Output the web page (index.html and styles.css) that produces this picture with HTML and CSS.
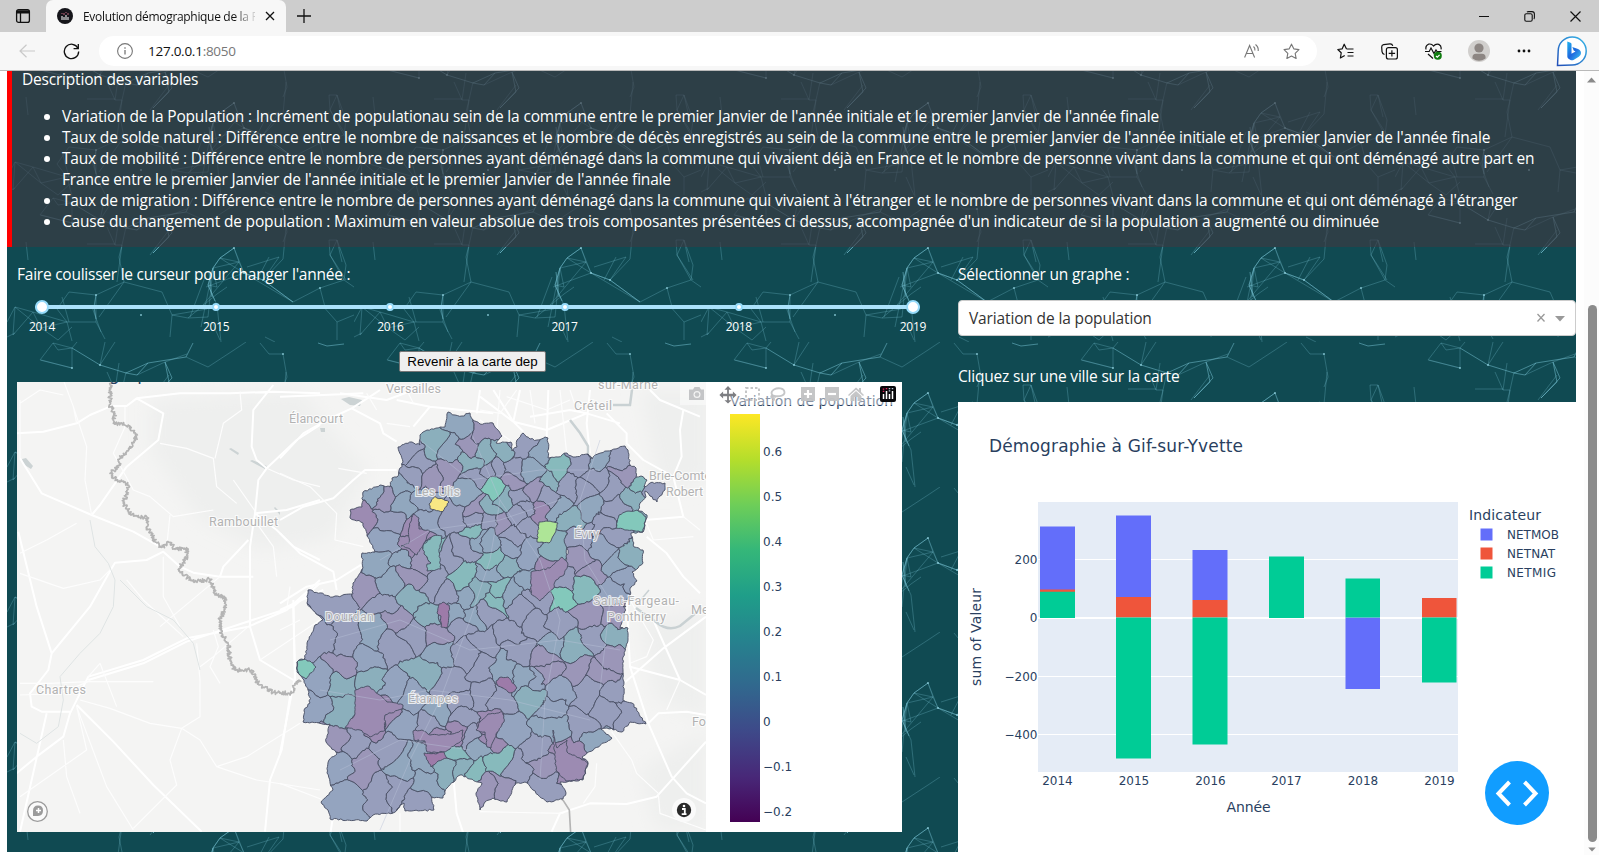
FILE: index.html
```html
<!DOCTYPE html>
<html lang="fr">
<head>
<meta charset="utf-8">
<title>Evolution démographique de la France</title>
<link rel="stylesheet" href="styles.css">
</head>
<body>
<header class="browser">
  <div class="tabbar">
    <svg class="tabs-icon" width="16" height="16" viewBox="0 0 16 16" fill="none" stroke="#111" stroke-width="1.3"><rect x="1.6" y="1.6" width="12.8" height="12.8" rx="2"/><path d="M2 3.2h12M2 4.6h12" stroke-width="1.8"/><path d="M5.5 5v9"/></svg>
    <div class="tab">
      <svg width="16" height="16" viewBox="0 0 16 16"><circle cx="8" cy="8" r="8" fill="#15151a"/><path d="M5 8v4M7 9v3M9 7v5M11 9v3" stroke="#ddd" stroke-width="1.2"/><path d="M5 5v1M7 5v2M9 4v1M11 5v2" stroke="#a2566a" stroke-width="1.2"/></svg>
      <span class="tab-title">Evolution démographique de la F</span>
      <svg width="10" height="10" viewBox="0 0 10 10" stroke="#111" stroke-width="1.3"><path d="M1 1l8 8M9 1l-8 8"/></svg>
    </div>
    <svg class="plus" width="14" height="14" viewBox="0 0 14 14" stroke="#111" stroke-width="1.3"><path d="M7 0v14M0 7h14"/></svg>
    <div class="win">
      <svg width="10" height="10" viewBox="0 0 10 10" stroke="#111"><path d="M0 5.5h10"/></svg>
      <svg width="11" height="11" viewBox="0 0 11 11" fill="none" stroke="#111" stroke-width="1.1"><rect x=".8" y="2.8" width="7.4" height="7.4" rx="1.5"/><path d="M3 1.2q.5-.6 1.5-.6H8q2.4 0 2.4 2.4v3.500q0 1-.6 1.500"/></svg>
      <svg width="11" height="11" viewBox="0 0 11 11" stroke="#111" stroke-width="1.2"><path d="M.5.5l10 10M10.500.5l-10 10"/></svg>
    </div>
  </div>
  <div class="toolbar">
    <svg class="back" width="16" height="14" viewBox="0 0 16 14" fill="none" stroke="#c9c9c9" stroke-width="1.2"><path d="M16 7H1M7.500.8L1 7l6.500 6.200"/></svg>
    <svg class="reload" width="17" height="17" viewBox="0 0 18 18" fill="none" stroke="#111" stroke-width="1.400"><path d="M15.800 5.500A7.600 7.600 0 1 0 16.600 9"/><path d="M16.200 1v5h-5"/></svg>
    <div class="pill">
      <svg width="16" height="16" viewBox="0 0 16 16" fill="none" stroke="#777" stroke-width="1.1"><circle cx="8" cy="8" r="7.400"/><path d="M8 7v4.600M8 4.200v1.500" stroke-width="1.300"/></svg>
      <span class="url">127.0.0.1<i>:8050</i></span>
      <svg class="read" width="16" height="16" viewBox="0 0 16 16" fill="none" stroke="#777" stroke-width="1.100"><path d="M.6 14.500L5.600 2.500l5 12M2.300 10.500h6.600M9.500 3.500q1.800 1.500 1.400 4M11.500 1.500q3.200 2.500 2.700 6.500"/></svg>
      <svg width="17" height="17" viewBox="0 0 18 18" fill="none" stroke="#777" stroke-width="1.200" stroke-linejoin="round"><path d="M9 1.200l2.400 5 5.500.8-4 3.900 1 5.500L9 13.800l-4.900 2.600 1-5.500-4-3.900 5.500-.8z"/></svg>
    </div>
    <div class="tools">
      <svg width="17" height="17" viewBox="0 0 17 17" fill="none" stroke="#111" stroke-width="1.200" stroke-linejoin="round"><path d="M9.500 6L7.200 1.200 5.200 5.800.8 6.500l3.400 3.300-.8 5.200 4.300-2.400M9.500 6h7M10.500 9.500h6M10.500 13h6"/></svg>
      <svg width="17" height="17" viewBox="0 0 17 17" fill="none" stroke="#111" stroke-width="1.200"><path d="M3.500 11.500Q1.300 10.800 1 8.600L.7 4.200Q.6 2 2.600 1.600L9 .8q2.200-.1 2.800 2"/><rect x="5.400" y="4.700" width="11" height="11.300" rx="2"/><path d="M10.900 7.200v6.400M7.700 10.400h6.400"/></svg>
      <svg width="17" height="17" viewBox="0 0 17 17" fill="none" stroke="#111" stroke-width="1.200"><path d="M1 6.500Q.2 2.400 3.500 1.200 6.500.4 8.500 3 11 .2 13.800 1.400q3 1.600 2.200 5M0 8.500h4.200L6 5l3 5.500L11 7l1 1.500h4.500M3 11l5 4.500"/><circle cx="12.800" cy="12.800" r="4" fill="#107c10" stroke="none"/><path d="M11 13l1.300 1.200 2.300-2.400" stroke="#fff"/></svg>
      <svg width="22" height="22" viewBox="0 0 22 22"><circle cx="11" cy="11" r="11" fill="#d1cfcd"/><circle cx="11" cy="8" r="4.600" fill="#8d8683"/><path d="M4.500 18.500Q4 13.800 8 13.800h6q4 0 3.500 4.700Q11 23 4.500 18.500z" fill="#8d8683"/></svg>
      <svg width="14" height="4" viewBox="0 0 14 4" fill="#111"><circle cx="2" cy="2" r="1.400"/><circle cx="7" cy="2" r="1.400"/><circle cx="12" cy="2" r="1.400"/></svg>
      <svg width="32" height="32" viewBox="0 0 32 32"><defs><linearGradient id="bg" x1="1" y1="0" x2="0" y2="1"><stop offset="0" stop-color="#35b6e8"/><stop offset="1" stop-color="#2350b8"/></linearGradient><linearGradient id="bb" x1="0" y1="0" x2="1" y2="1"><stop offset="0" stop-color="#1fb4f0"/><stop offset=".5" stop-color="#1f66dd"/><stop offset="1" stop-color="#3cc8f4"/></linearGradient></defs><path d="M1.500 30.500L2.200 16A14 14 0 1 1 16 30z" fill="#fff" stroke="url(#bg)" stroke-width="1.500"/><path d="M11.300 6.500l3.200 1.200q1 .4 1 1.500v9.500l4-2.300-1.800-.9-1.400-3.500 5.700 2q3 1.200 3 4.200 0 2.300-2.200 3.600l-5.300 3.100q-1.500.8-3 0l-2-1.200q-1.200-.8-1.200-2.200z" fill="url(#bb)"/></svg>
    </div>
  </div>
</header>

<div class="viewport">
  <main class="page">
    <section class="description">
      <p>Description des variables</p>
      <ul>
        <li><span class="l1">Variation de la Population : Incrément de populationau sein de la commune entre le premier Janvier de l'année initiale et le premier Janvier de l'année finale</span></li>
        <li><span class="l2">Taux de solde naturel : Différence entre le nombre de naissances et le nombre de décès enregistrés au sein de la commune entre le premier Janvier de l'année initiale et le premier Janvier de l'année finale</span></li>
        <li><span class="l3">Taux de mobilité : Différence entre le nombre de personnes ayant déménagé dans la commune qui vivaient déjà en France et le nombre de personne vivant dans la commune et qui ont déménagé autre part en<br>France entre le premier Janvier de l'année initiale et le premier Janvier de l'année finale</span></li>
        <li><span class="l4">Taux de migration : Différence entre le nombre de personnes ayant déménagé dans la commune qui vivaient à l'étranger et le nombre de personnes vivant dans la commune et qui ont déménagé à l'étranger</span></li>
        <li><span class="l5">Cause du changement de population : Maximum en valeur absolue des trois composantes présentées ci dessus, accompagnée d'un indicateur de si la population a augmenté ou diminuée</span></li>
      </ul>
    </section>
    <div class="columns">
      <section class="left">
        <p class="label">Faire coulisser le curseur pour changer l'année :</p>
        <div class="slider">
          <div class="rail"><b class="handle"></b><b></b><b></b><b></b><b></b><b class="handle"></b></div>
          <div class="marks"><span>2014</span><span>2015</span><span>2016</span><span>2017</span><span>2018</span><span>2019</span></div>
        </div>
        <button class="reset">Revenir à la carte dep</button>
        <svg class="map" width="885" height="450" viewBox="17 382 885 450">
          <defs>
            <clipPath id="mapClip"><rect x="17" y="382" width="689" height="450"/></clipPath>
            <clipPath id="deptClip"><path id="deptPath"/></clipPath>
            <linearGradient id="viridis" x1="0" y1="1" x2="0" y2="0"><stop offset="0" stop-color="#440154"/><stop offset=".111" stop-color="#482878"/><stop offset=".222" stop-color="#3e4989"/><stop offset=".333" stop-color="#31688e"/><stop offset=".444" stop-color="#26828e"/><stop offset=".556" stop-color="#1f9e89"/><stop offset=".667" stop-color="#35b779"/><stop offset=".778" stop-color="#6ece58"/><stop offset=".889" stop-color="#b5de2b"/><stop offset="1" stop-color="#fde725"/></linearGradient>
            <filter id="soft" x="-50%" y="-50%" width="200%" height="200%"><feGaussianBlur stdDeviation="9"/></filter>
          </defs>
          <rect x="17" y="382" width="885" height="450" fill="#fff"/>
          <g clip-path="url(#mapClip)">
            <rect x="17" y="382" width="689" height="450" fill="#f4f4f3"/>
            <g fill="#eeefee" filter="url(#soft)"><path d="M150 400L300 390 340 440 370 470 330 540 260 550 200 520 150 450z"/><path d="M640 390h70v90l-50 10zM640 620l66-10v110l-50-20zM640 770l66-40v100h-50z"/></g>
            <g fill="#ccd3d4"><path d="M22 459l4-1 7 8-2 3-8-5zM229 449l2-1 8 5-1 2zM250 461l2-1 15 6-2 3zM341 399l8-2 13 3-2 6-10-1zM320 428h5v4h-4zM274 508l1-1 5 5v3z"/></g>
            <g class="roads">
              <g transform="translate(0 380) scale(.33333)">
                <path d="M50 160L130 155 230 130 270 105 330 80 M410 55L540 40 690 40 820 35 960 40 M330 78L380 78 410 55 490 100 475 180 380 260 300 375 275 405 M60 235L125 340 275 405 400 455 480 500 M55 455L110 680 155 820 145 870 90 940 95 980 125 995 210 995 M155 820L270 680 335 565 345 548 440 540 490 515 540 560 580 578 660 590 760 590 M820 15L760 90 755 200 770 240 800 265 775 300 765 400 750 500 750 740 780 840 880 900 M960 135L890 180 800 265 M960 600L860 690 745 740 560 775 430 840 265 890 210 1000 190 1070 110 1130 50 1180 M960 610L880 680 560 785 430 850 265 900 M880 680L885 900 870 950 845 1110 810 1200 795 1355 M230 975L340 1085 460 1215 605 1355 M140 1000L60 1355 M745 480L670 560 660 590 M765 400L860 390 960 360 M765 400L830 450 880 500 960 540"/>
                <path class="thin" d="M60 70L120 30 190 45 M190 0L220 80 230 130 M375 80V140L340 220 400 330 450 350 520 410 640 390 M480 190L560 205 640 235 650 320 710 370 M720 35L725 90 670 130 645 235 M800 265L880 300 960 320 M220 80L260 200 255 300 275 405 M60 520L140 480 230 430 M60 580L190 625 300 600 335 565 M490 530V650L540 740 M510 405L500 500 M660 590L480 740 M380 600L430 660 550 770 M590 790L600 900 600 1010 545 1045 450 1030 330 985 240 960 M60 910H150L265 905 460 905 M265 890L300 850 350 980 M545 1045L510 1140 530 1215 400 1345 M545 1045L600 1080 650 1160 740 1130 900 1030 M650 1160L770 1200 960 1230 M190 1080L200 1190 240 1300 M60 1250L260 1110 230 980 320 1220 400 1350 M780 840L960 720 M60 60V235 M745 740L640 830 600 860 M640 750L655 800 630 860 660 910 M830 590L820 500 770 430 M700 300L770 400 M860 690L870 620 M60 945L180 940 265 905"/>
                <path class="stream" d="M270 420L285 500 325 550 345 600 340 680 300 760 240 820 180 890 190 960 175 1040 110 1090 60 1060 M360 600L440 680 520 720 580 790 600 870"/>
              </g>
              <g transform="translate(280 390) scale(.33333)"><path d="M0 20L130 15 250 10 M0 205L70 130 140 90 215 55 270 20 300 0 M215 55L300 100 310 130 350 155 M180 10L320 30 400 0 M0 390L70 350 160 325 220 270 255 240 350 240 M0 430L60 490 160 545 170 600 M0 640L80 590 170 570 250 520 M0 660L130 600 M350 30L450 50 640 70 M450 50L400 110 M600 0L590 70"/><path class="thin" d="M0 250L90 290 170 370 165 450 250 470 M175 235L260 250 M320 100L390 110 M260 10L290 60 M380 0L400 40"/></g>
              <g transform="translate(480 390) scale(.33333)"><path d="M0 20L100 95 200 120 320 70 420 100 M330 0L320 100 330 190 M510 0L540 30 660 80 M380 70L440 130 440 160 490 210 580 260 605 200 600 120 610 60 M580 260L610 380 495 390 M500 440L560 490 610 560 660 610 M120 0L100 95 M205 0L200 140 M40 0L100 95 130 125 M320 70L270 60 150 80"/><path class="thin" d="M0 60L60 70 110 0 M150 0L165 100 M60 0L50 130 M240 0L260 190 M0 90L90 150 M270 0L290 60 M80 20L200 60 270 30 M495 390L520 450 640 440 M610 380L660 420"/></g>
              <g transform="translate(480 600) scale(.33333)"><path d="M440 0L450 200 505 370 575 530 620 580 678 610 M450 200L600 240 678 285 M678 50L550 145 420 260 M520 60L600 240 M505 370L535 340 620 335 678 345 M678 425L530 590 440 612 330 610 240 640 215 695"/><path class="thin" d="M350 490L345 560 310 610 M395 395L455 480 470 520 535 580 540 640 678 690 M600 240L560 330 M250 640L0 635 M450 0L520 120 500 170 450 190"/></g>
              <g transform="translate(280 600) scale(.33333)"><path d="M40 0L45 230 0 460 M160 640L150 710 M520 530L530 640 550 700"/><path class="thin" d="M0 550L130 600 M360 640V700 M60 60L0 90"/></g>
            </g>
            <g fill="none" stroke="#c9d1d3" stroke-width="2.500"><path d="M570 420l10 13 8 13v10M613 405h17l3-23M636 608l20 14q12 10 24 4l22-18"/><path d="M625 595l14 7 10-12" stroke-width="1.500"/></g>
            <g transform="translate(0 380) scale(.33333)"><path id="regional" class="region"/><path class="region" d="M1610 1100L1620 1190 1655 1230 1690 1262 1708 1290 1712 1360"/></g>
            <g id="communes" stroke="#4b5166" stroke-width=".95" stroke-linejoin="round"></g>
            <g class="inner-roads"><path d="M470 430L500 500 490 560 470 620 440 700 410 760 380 830M600 440L580 500 585 560 610 600 600 690M380 560L430 530 500 520 560 500M330 640L400 620 470 650 560 640 620 650M320 690L380 700 430 690 510 700 590 720M500 500L540 560 560 620 545 700 540 780M420 440L470 480 540 470 600 470M340 770L400 740 470 750"/></g>
            <g class="places">
              <text x="386" y="393" textLength="55">Versailles</text><text x="289" y="423" textLength="54">Élancourt</text><text x="574" y="410" textLength="38">Créteil</text><text x="598" y="389" textLength="60">sur-Marne</text><text x="649" y="480">Brie-Comte-</text><text x="666" y="496">Robert</text><text x="415" y="496" textLength="45">Les Ulis</text><text x="574" y="538" textLength="25">Évry</text><text x="209" y="526" textLength="69">Rambouillet</text><text x="36" y="694" textLength="50">Chartres</text><text x="325" y="621" textLength="49">Dourdan</text><text x="408" y="703" textLength="50">Étampes</text><text x="593" y="605" textLength="86">Saint-Fargeau-</text><text x="607" y="621" textLength="59">Ponthierry</text><text x="692" y="726">Fo</text><text x="691" y="614">Me</text>
            </g>
            <text x="109" y="380" class="plot-title">grap</text>
            <circle cx="684" cy="810" r="12" fill="#fafafa"/><circle cx="684" cy="810" r="7.200" fill="#292929"/><path d="M682 809h2.800v5M681.700 814.200h4.800" stroke="#fff" stroke-width="1.800" fill="none"/><circle cx="684" cy="806" r="1.300" fill="#fff"/>
            <circle cx="37.500" cy="811.500" r="9.800" fill="#fafafa" stroke="#9b9b9b" stroke-width="1.300"/><path d="M33 816V811q0-5.500 5-5.500t5 5-5 5.500z" fill="#9b9b9b"/><path d="M38.500 808v5M36 810.500h5" stroke="#fff" stroke-width="1.500"/>
          </g>
          <rect x="730" y="414" width="30" height="408" fill="url(#viridis)"/>
          <g class="tick"><text x="763" y="455.500">0.6</text><text x="763" y="500.500">0.5</text><text x="763" y="545.500">0.4</text><text x="763" y="590.500">0.3</text><text x="763" y="635.500">0.2</text><text x="763" y="680.500">0.1</text><text x="763" y="725.500">0</text><text x="763" y="770.500">−0.1</text><text x="763" y="815.500">−0.2</text></g>
          <text x="730" y="406" class="axis-title" textLength="163">Variation de population</text>
          <rect x="680" y="382" width="218" height="23" fill="#fff" opacity=".45"/>
          <g fill="#c2c3c5" opacity=".95">
            <path d="M689 389.500h4l1.500-2.500h5l1.500 2.500h3v10.500h-15z"/><circle cx="697" cy="394.500" r="3.500" fill="#f4f4f4"/><circle cx="697" cy="394.500" r="2.300"/>
            <path d="M728 386l3.500 3.800h-2.600v4h4v-2.400l3.700 3.600-3.700 3.600v-2.400h-4v4h2.600L728 403.500l-3.500-3.300h2.600v-4h-4v2.400l-3.700-3.600 3.700-3.600v2.400h4v-4h-2.600z" fill="#77787c"/>
            <rect x="746" y="388" width="13" height="12" fill="none" stroke="#c2c3c5" stroke-width="2" stroke-dasharray="2.500 2"/>
            <path d="M776 397c-5-1-6-5-2-7.500 4-2.300 10-1.300 10.500 2.500.3 4-6 5-11 3.600-3-.8-3 2.400-.5 2.400 1.700 0 1.700 2-.5 3" fill="none" stroke="#c2c3c5" stroke-width="1.800"/>
            <path d="M801 387h14v14h-14z"/><path d="M808 390v8M804 394h8" stroke="#fff" stroke-width="2.200"/>
            <path d="M825 387h14v14h-14z"/><path d="M828 394h8" stroke="#fff" stroke-width="2.200"/>
            <path d="M848 395l8-7.500 3 2.600V388h2v4l3 3-1 1-7-6.300-7 6.300zM850.500 396l5.500-5 5.500 5v5h-4v-4h-3v4h-4z"/>
          </g>
          <rect x="880" y="386" width="16" height="16" rx="2" fill="#07070a"/><path d="M883.500 394v5M886.500 391v8M889.500 394v5M892.500 391v8" stroke="#fff" stroke-width="1.500"/><path d="M883.500 388.500v4M886.500 388v1.500" stroke="#e0245e" stroke-width="1.500" stroke-dasharray="1.300 1"/><path d="M889.500 388v4M892.500 388v1.500" stroke="#bcd" stroke-width="1.500" stroke-dasharray="1.300 1"/>
        </svg>
      </section>
      <section class="right">
        <p class="label">Sélectionner un graphe :</p>
        <div class="select"><span>Variation de la population</span><svg width="30" height="12" viewBox="0 0 30 12"><path d="M2.500 2l7 7.500M9.500 2l-7 7.500" stroke="#999" stroke-width="1.300"/><path d="M20 4h10l-5 5.500z" fill="#999"/></svg></div>
        <p class="label second">Cliquez sur une ville sur la carte</p>
        <svg class="chart" width="618" height="450" viewBox="958 402 618 450">
          <rect x="958" y="402" width="618" height="450" fill="#fff"/>
          <text x="989" y="452" class="plot-title" textLength="254">Démographie à Gif-sur-Yvette</text>
          <rect x="1038" y="502" width="420" height="270" fill="#e5ecf6"/>
          <path d="M1038 559.500h420M1038 676.500h420M1038 734.500h420" stroke="#fff"/><path d="M1038 618h420" stroke="#fff" stroke-width="2"/>
          <g fill="#636efa"><path d="M1040 526.500h35V590h-35zM1116 515.500h35V597h-35zM1192.500 550h35v50h-35zM1345.500 617.500h34.500V689h-34.500z"/></g>
          <g fill="#ef553b"><path d="M1040 589.500h35v2.500h-35zM1116 597h35v20.500h-35zM1192.500 600h35v17.500h-35zM1422 598h34.500v19.500H1422z"/></g>
          <g fill="#00cc96"><path d="M1040 591.700h35V618h-35zM1116 617.500h35V758.500h-35zM1192.500 617.500h35V744.500h-35zM1269 556.500h35V618h-35zM1345.500 578.500h34.500v39h-34.500zM1422 617.500h34.500V682.500H1422z"/></g>
          <g class="tick end"><text x="1037.500" y="563.500">200</text><text x="1037.500" y="622">0</text><text x="1037.500" y="680.500">−200</text><text x="1037.500" y="738.500">−400</text></g>
          <g class="tick mid"><text x="1057.500" y="785">2014</text><text x="1134" y="785">2015</text><text x="1210.500" y="785">2016</text><text x="1286.500" y="785">2017</text><text x="1363" y="785">2018</text><text x="1439.500" y="785">2019</text></g>
          <text x="1248.500" y="812" class="axis-title middle" textLength="44">Année</text>
          <text transform="translate(981 637) rotate(-90)" class="axis-title middle" textLength="98">sum of Valeur</text>
          <text x="1469" y="520" class="axis-title" textLength="72">Indicateur</text>
          <path d="M1480.500 528.500h12v12h-12z" fill="#636efa"/><path d="M1480.500 547.500h12v12h-12z" fill="#ef553b"/><path d="M1480.500 566.500h12v12h-12z" fill="#00cc96"/>
          <g class="tick"><text x="1507" y="538.500" textLength="52">NETMOB</text><text x="1507" y="557.500" textLength="48">NETNAT</text><text x="1507" y="576.500" textLength="49">NETMIG</text></g>
          <circle cx="1517" cy="793" r="32" fill="#119dff"/><path d="M1509.500 782l-11 11.500 11 11.500M1524.500 782l11 11.500-11 11.500" fill="none" stroke="#fff" stroke-width="4"/>
        </svg>
      </section>
    </div>
  </main>
  <div class="scrollbar"><svg width="9" height="6" viewBox="0 0 9 6"><path d="M0 5.500L4.500.5 9 5.500z" fill="#8a8a8a"/></svg><div class="thumb"></div><svg width="8" height="5" viewBox="0 0 9 6"><path d="M0 .5h9L4.500 5.500z" fill="#8a8a8a"/></svg></div>
</div>
<script src="map.js"></script>
</body>
</html>
```
FILE: styles.css
```css
* { box-sizing: border-box; }
body { margin: 0; height: 855px; overflow: hidden; background: #fff; font-family: "Open Sans", "Noto Sans", sans-serif; display: flex; flex-direction: column; }
svg { display: block; flex: none; }
p, ul { margin: 0; }
.browser { flex: none; height: 71px; border-bottom: 1px solid #b9b9b9; background: #f7f7f7; }
.tabbar { display: flex; height: 32px; background: #cdcdcd; align-items: center; }
.tabs-icon { margin: 0 15px; }
.tab { width: 240px; height: 32px; background: #f7f7f7; border-radius: 7px 7px 0 0; padding: 0 11px; display: flex; align-items: center; gap: 10px; }
.tab-title { flex: 1; min-width: 0; white-space: nowrap; font-size: 12px; letter-spacing: -.32px; background: linear-gradient(90deg, #111 88%, #ccc 98%); -webkit-background-clip: text; background-clip: text; color: transparent; }
.plus { margin-left: 11px; }
.win { margin-left: auto; display: flex; align-items: center; gap: 35px; padding-right: 18px; }
.toolbar { display: flex; height: 38px; align-items: center; }
.back { margin-left: 19px; }
.reload { margin-left: 28px; }
.pill { margin-left: 19px; width: 1218px; height: 30px; border-radius: 15px; background: #fff; display: flex; align-items: center; padding: 0 17px 0 18px; }
.url { margin-left: 15px; font-size: 13.500px; letter-spacing: -.26px; color: #111; }
.url i { font-style: normal; color: #777; }
.read { margin: 0 23px 0 auto; }
.tools { display: flex; align-items: center; gap: 27px; margin-left: 20px; }
.tools svg:nth-child(4) { margin-left: -1px; }
.tools svg:nth-child(6) { margin-left: -2px; }
.viewport { flex: 1; min-height: 0; display: flex; padding-left: 7px; }
.page {
  width: 1569px; height: 781px; background-color: #104a52; background-position: 0 -19px; overflow: hidden;
  background-image: url("data:image/svg+xml,%3Csvg xmlns='http://www.w3.org/2000/svg' width='347' height='145' fill='none' stroke='%2376c4d4' stroke-width='.8'%3E%3Cg opacity='.36'%3E%3Cpath d='M33 18L46 1 65 6V26L33 18M46 1L51 8 65 6M93 23L108 0M93 23L98 0M227 8L201 25 179 15M239 0L227 8M253 1L262 12 276 12 280 35 276 45M19 45L21 63M112 21L108 48 115 48 119 30M80 47H108M322 43H330L339 68 337 83 323 58 322 43M330 43L323 58M330 43L335 65M232 65L237 76 256 83 272 60 240 70M227 51L213 61 206 71 201 88 210 108M227 51L232 65 213 61M232 65L206 71M227 51L237 76M213 61L237 76M206 71L210 90 201 88M206 71L201 120 181 121 165 118 155 95 117 85 112 60 115 48M117 85L89 98V125L98 142M117 85L92 120M62 95L89 98M62 95L50 112 60 125 89 125M60 125L34 131 51 143M60 125L65 144M26 115L8 110 6 138 26 115 34 131M26 115L60 125M8 110L34 131M165 118L200 112M181 121L210 97 220 90M165 118L163 140M286 105L256 83M286 105L237 76M313 91L337 83M313 91L286 105M313 91L318 110M205 125L213 143M258 140L268 145M180 12L158 20M337 83L347 90M0 140L8 136M315 108L330 125 347 118M330 125V143M199 90L237 76M196 108L232 65M194 130L206 71M210 108L214 145M256 83L276 62 279 30M250 83L262 60M108 48L100 30M115 48L110 85M70 0L65 6M8 110L0 125M130 33L158 20M143 58L162 33M55 100L62 125M85 110L94 135M323 58L339 83M183 120L198 80M34 18L65 26M51 143L65 130'/%3E%3C/g%3E%3Cg opacity='.65'%3E%3Cpath d='M65 6L93 23 119 31 141 21 179 15 186 1M158 20L162 40 146 56M158 20L165 36 146 56M311 1L320 4 337 2M227 51L213 61 206 71 201 88 208 104M237 76L256 83 286 105M89 98L87 110 89 122M119 31L130 33 141 21M202 75L205 100'/%3E%3C/g%3E%3Cg fill='%2395d6e2' stroke='none' opacity='.6'%3E%3Cpath d='M226 50h2v2h-2zM64 25h2v2h-2zM92 22h2v2h-2zM275 11h2v2h-2zM88 97h2v2h-2zM312 90h2v2h-2zM133 117h2v2h-2zM255 82h2v2h-2zM236 75h2v2h-2z'/%3E%3C/g%3E%3C/svg%3E");
}
.description { height: 176px; border-left: 5px solid #f00; background: rgba(62, 57, 66, .65); color: #fff; padding: 0 0 0 10px; font-size: 15.500px; line-height: 21px; white-space: nowrap; letter-spacing: -.2px; }
.description p { line-height: 17px; }
.description ul { padding: 18px 0 0 40px; }
.l1 { letter-spacing: -.16px; }
.l2 { letter-spacing: -.19px; }
.l3 { letter-spacing: -.185px; }
.l4 { letter-spacing: -.18px; }
.l5 { letter-spacing: -.17px; }
.columns { display: flex; height: 605px; }
.left { width: 951px; padding: 16px 0 0 10px; display: flex; flex-direction: column; }
.label { color: #fff; font-size: 15.500px; line-height: 22px; letter-spacing: -.2px; white-space: nowrap; }
.left .label { letter-spacing: -.24px; }
.slider { height: 66px; padding-top: 20px; margin-left: 25px; width: 871px; }
.rail { height: 4px; background: #abe2fb; display: flex; justify-content: space-between; align-items: center; margin: 0 -7px; border-radius: 2px; }
.rail b { width: 8px; height: 8px; border-radius: 50%; background: #fff; border: 2px solid #96dbfa; margin: 0 3px; }
.rail .handle { width: 14px; height: 14px; margin: 0; }
.marks { display: flex; justify-content: space-between; margin: 9px -15px 0; color: #fff; font-size: 12px; line-height: 18px; letter-spacing: -.3px; }
.marks span { width: 30px; text-align: center; }
.reset { width: 147px; height: 21px; margin: 0 0 0 382px; padding: 0; font: 13.333px "Liberation Sans", Arial, sans-serif; color: #000; background: #efefef; border: 1px solid #767676; border-radius: 2px; }
.map { margin-top: 10px; }
.roads path { fill: none; stroke: #fff; stroke-width: 6; stroke-linejoin: round; }
.roads .thin { stroke-width: 3.5; stroke: #fdfdfd; }
.roads .stream { stroke: #dfe4e4; stroke-width: 3; }
.inner-roads { fill: none; stroke: #b9c2d6; stroke-width: 1; opacity: .45; }
.region { fill: none; stroke: #b4b4b4; stroke-width: 5; stroke-linejoin: round; }
.places { font: 12.500px Roboto, sans-serif; fill: #b2b2b2; stroke: #fff; stroke-width: 2px; stroke-opacity: .8; paint-order: stroke; }
.plot-title { font: 17px "DejaVu Sans", Verdana, sans-serif; fill: #2a3f5f; }
.axis-title { font: 14px "DejaVu Sans", Verdana, sans-serif; fill: #2a3f5f; }
.tick { font: 12px "DejaVu Sans", Verdana, sans-serif; fill: #2a3f5f; }
.end { text-anchor: end; }
.mid, .middle { text-anchor: middle; }
.right { width: 618px; padding-top: 16px; }
.select { height: 36px; margin-top: 15px; background: #fff; border: 1px solid #ccc; border-radius: 4px; display: flex; align-items: center; justify-content: space-between; padding: 0 10px; color: #333; font-size: 15.500px; letter-spacing: -.14px; }
.label.second { margin-top: 29px; }
.chart { margin-top: 15px; }
.scrollbar { margin-left: 8px; width: 15px; background: #fcfcfc; display: flex; flex-direction: column; align-items: center; padding-top: 6px; }
.thumb { width: 9px; height: 537px; margin: 222px 0 5px 2px; border-radius: 5px; background: #8b8b8b; flex: none; }
```
FILE: map.js
```javascript
// Department outline, clockwise from the northern tip.
const outline = "448,412 455,415 462,416 470,413 473,420 480,424 493,423 502,436 496,443 511,442 512,451 517,447 517,440 523,433 530,439 537,440 545,437 548,438 548,458 558,457 567,453 573,457 588,454 592,459 595,455 607,451 625,446 628,450 630,465 636,468 636,477 641,476 647,480 644,487 650,483 665,483 665,490 660,496 657,502 650,496 645,491 646,497 640,503 638,510 647,515 643,532 631,533 634,547 643,550 643,563 632,572 637,581 631,587 630,595 623,607 626,606 623,618 620,628 628,628 628,640 623,657 623,672 624,682 623,700 632,703 646,724 630,722 622,732 607,728 601,729 612,738 587,753 582,757 588,762 583,780 567,782 560,782 566,793 563,799 547,802 533,790 525,782 516,783 507,802 493,798 485,802 480,810 476,793 482,783 460,775 447,788 443,798 432,797 434,810 405,811 404,803 393,813 373,815 367,821 330,819 328,810 321,802 333,790 327,773 329,760 337,754 326,742 330,724 303,722 304,710 310,703 309,692 304,680 297,670 297,662 305,658 307,643 315,625 323,620 315,612 307,603 308,590 333,597 353,594 353,583 363,568 362,553 375,552 367,536 363,523 350,518 350,510 362,507 363,492 380,485 390,487 392,478 397,477 403,462 398,447 412,442 420,445 420,435 427,430 445,427".split(" ").map(p => p.split(",").map(Number));
const region = "335,0 328,75 345,100 340,130 385,135 412,165 385,210 360,235 355,262 330,280 350,300 385,315 380,340 370,370 395,405 420,412 440,410 440,440 455,460 465,485 485,502 510,487 525,508 560,503 562,530 540,560 540,575 580,605 630,598 650,645 678,655 672,690 660,720 665,760 685,795 690,840 705,870 755,870 768,900 780,915 820,937 875,940 885,915 905,900".split(" ").map(p => p.split(",").map(Number));

const palette = { a: "#979ebc", b: "#94a4bf", c: "#91a7be", d: "#8bafbc", e: "#87babc", f: "#83c8bb", p: "#9b96b8", q: "#9c8bb2", m: "#9d7ba9" };

// Commune centres grouped by shade.
const seeds = {
  a: "412,452 420,463 493,468 410,473 477,477 390,520 457,517 473,522 447,557 465,550 435,582 450,593 340,603 387,605 497,468 523,445 515,470 548,497 577,465 568,487 583,493 597,477 618,460 613,487 655,490 613,510 605,523 615,537 527,507 515,518 530,527 488,523 513,533 580,537 565,578 538,597 348,640 395,647 415,633 463,627 483,640 467,653 483,667 453,683 460,703 467,717 433,723 357,740 387,750 380,792 397,790 417,803 470,738 483,697 487,613 510,632 537,623 520,610 558,622 593,638 517,652 613,690 587,693 500,700 607,713 583,727 627,715 537,752 518,770 545,785 320,640 520,497",
  b: "423,500 427,518 390,542 508,548 530,553 602,550 612,590 623,577 368,662 392,688 413,697 403,723 317,707 340,767 347,800 320,680 510,730 550,707 535,680 560,690",
  c: "458,425 453,450 400,487 372,495 405,503 467,493 482,537 403,557 377,565 388,583 462,597 530,472 542,452 600,460 593,507 560,508 490,540 617,565 523,580 513,593 492,573 372,630 440,653 473,617 457,614 437,713 403,763 420,760 427,783 480,747 502,667 527,680 553,727 598,740 552,647",
  d: "433,443 487,453 470,463 490,507 413,598 480,593 497,453 550,482 505,497 637,497 570,517 628,553 553,548 510,567 427,617 343,683 372,678 423,672 340,712 447,770 617,637 575,648 535,697 460,768",
  e: "558,467 640,483 432,553 463,577 493,560 497,587 495,602 582,590 455,750 473,772 497,760 473,527",
  f: "492,487 563,600",
  p: "483,432 468,445 447,472 432,478 385,498 477,507 422,560 363,587 410,577 512,482 537,488 623,477 502,523 580,560 593,570 393,617 435,635 342,668 335,738 363,768 587,613 615,617 547,658 548,672 610,658 577,668 603,673 542,765 503,787 485,790",
  q: "360,515 417,533 410,545 537,510 547,572 540,583 370,727 388,712 440,738 457,735 488,723 490,740 568,753 572,770",
  m: ""
};
const sites = Object.entries(seeds).flatMap(([k, s]) => s.split(" ").filter(Boolean).map(p => [...p.split(",").map(Number), k]));

const noise = (x, y) => { const v = Math.sin(x * 12.9898 + y * 78.233) * 43758.5453; return v - Math.floor(v) - 0.5; };
const warp = ([x, y]) => [
  x + 2.6 * Math.sin(y / 5.3 + x / 17) + 1.6 * Math.sin(y / 2.9 + x / 7),
  y + 2.6 * Math.sin(x / 5.9 - y / 13) + 1.6 * Math.sin(x / 3.1 + y / 8)
];

// Breaks a segment into irregular steps; both neighbours get the same line.
function jag(a, b, amp) {
  const flip = a[0] > b[0] || (a[0] === b[0] && a[1] > b[1]);
  const [s, e] = flip ? [b, a] : [a, b];
  const dx = e[0] - s[0], dy = e[1] - s[1], len = Math.hypot(dx, dy);
  const n = Math.max(1, Math.round(len / 2.2)), pts = [s];
  for (let i = 1; i < n; i++) {
    const t = i / n, o = noise(Math.round(s[0]) + i * 3, Math.round(e[1]) + i) * 2 * amp;
    pts.push([s[0] + dx * t - dy / len * o, s[1] + dy * t + dx / len * o]);
  }
  pts.push(e);
  return flip ? pts.reverse() : pts;
}
function toPath(poly, amp, map = p => p, close = true) {
  const out = [];
  poly.forEach((p, i) => {
    if (!close && i === poly.length - 1) return;
    out.push(...jag(p, poly[(i + 1) % poly.length], amp).slice(0, -1));
  });
  return "M" + out.map(map).map(p => p[0].toFixed(1) + " " + p[1].toFixed(1)).join("L") + (close ? "Z" : "");
}
function cell(i) {
  let poly = [[280, 400], [680, 400], [680, 835], [280, 835]];
  const [x, y] = sites[i];
  sites.forEach(([u, v], j) => {
    if (j === i) return;
    const nx = u - x, ny = v - y, c = (u * u + v * v - x * x - y * y) / 2, next = [];
    poly.forEach((p, k) => {
      const q = poly[(k + 1) % poly.length];
      const dp = p[0] * nx + p[1] * ny - c, dq = q[0] * nx + q[1] * ny - c;
      if (dp <= 0) next.push(p);
      if ((dp < 0 && dq > 0) || (dp > 0 && dq < 0)) {
        const t = dp / (dp - dq);
        next.push([+(p[0] + (q[0] - p[0]) * t).toFixed(3), +(p[1] + (q[1] - p[1]) * t).toFixed(3)]);
      }
    });
    poly = next;
  });
  return poly.filter((p, k) => { const q = poly[(k + 1) % poly.length]; return Math.hypot(p[0] - q[0], p[1] - q[1]) > 0.01; });
}
const edge = toPath(outline, 0.9);
document.getElementById("deptPath").setAttribute("d", edge);
document.getElementById("regional").setAttribute("d", toPath(region, 6, p => p, false));
const cells = sites.map((s, i) => `<path d="${toPath(cell(i), .9, warp)}" fill="${palette[s[2]]}"/>`).join("");

// Communes with a distinctive shape, drawn over their neighbours.
const special = [
  ["429,504 435,496.5 449,502 443,511.5 430,508.5", "#f8e884"],
  ["539,522 546,521 558,523 555,533 549,543 537,542", "#aee597"],
  ["619,515 625,512 637,510 646,517 643,532 616,528", "#83c8bb"],
  ["297,662 301,659 310,661 316,667 306,679 297,672", "#83c8bb"],
  ["355,690 368,686 378,694 387,702 403,705 402,709 385,715 385,730 370,737 360,730 345,728 355,714", palette.q],
  ["413,731 422,730 430,735 452,734 463,730 462,740 448,750 443,752 427,752 425,741 414,740", palette.q],
  ["480,722 488,714 503,712 504,722 496,734 491,748 487,747 485,732 476,730", palette.q],
  ["424,753 436,754 444,752 447,758 438,761 431,767", palette.m],
  ["496,681 501,677 508,677 517,688 515,691 510,693 503,688 498,686", palette.m],
  ["439,604 443,602 449,605 449,616 448,627 441,627 441,616 437,613", palette.m],
  ["531,572 550,568 562,557 568,564 564,575 556,580 553,589 540,601 531,594", palette.q],
  ["423,545 433,536 442,536 439,552 441,569 427,571 427,564 431,563 424,554", palette.e],
  ["409,528 413,514 419,518 419,529 430,531 424,543 417,555 408,548 401,546 409,543", palette.q],
  ["553,730 557,748 567,740 567,752 580,758 588,763 583,779 566,781 556,770", palette.q]
].map(([p, f]) => `<path d="${toPath(p.split(" ").map(q => q.split(",").map(Number)), 0.7)}" fill="${f}"/>`).join("");
document.getElementById("communes").innerHTML = `<g clip-path="url(#deptClip)">${cells}</g>${special}<path d="${edge}" fill="none"/>`;
```
